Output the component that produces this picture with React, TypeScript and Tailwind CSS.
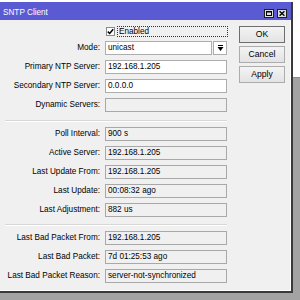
import React from "react";

type Row = { label: string; value: string; kind: "select" | "edit" | "ro" };

const group1: Row[] = [
  { label: "Mode:", value: "unicast", kind: "select" },
  { label: "Primary NTP Server:", value: "192.168.1.205", kind: "edit" },
  { label: "Secondary NTP Server:", value: "0.0.0.0", kind: "edit" },
  { label: "Dynamic Servers:", value: "", kind: "ro" },
];

const group2: Row[] = [
  { label: "Poll Interval:", value: "900 s", kind: "ro" },
  { label: "Active Server:", value: "192.168.1.205", kind: "ro" },
  { label: "Last Update From:", value: "192.168.1.205", kind: "ro" },
  { label: "Last Update:", value: "00:08:32 ago", kind: "ro" },
  { label: "Last Adjustment:", value: "882 us", kind: "ro" },
];

const group3: Row[] = [
  { label: "Last Bad Packet From:", value: "192.168.1.205", kind: "ro" },
  { label: "Last Bad Packet:", value: "7d 01:25:53 ago", kind: "ro" },
  { label: "Last Bad Packet Reason:", value: "server-not-synchronized", kind: "ro" },
];

function Field({ row }: { row: Row }) {
  if (row.kind === "select") {
    return (
      <div className="ml-[5px] flex h-[14px] w-[122px] gap-[1px]">
        <div className="flex h-full w-[107px] items-center border border-[#adadad] bg-white pl-[2px] leading-none">
          {row.value}
        </div>
        <div className="flex h-full w-[14px] items-center justify-center border border-[#adadad] bg-white">
          <svg width="7" height="7" viewBox="0 0 7 7">
            <rect x="1" y="0" width="5" height="1" fill="#000" />
            <polygon points="0.5,2 6.5,2 3.5,6" fill="#000" />
          </svg>
        </div>
      </div>
    );
  }
  return (
    <div
      className={
        row.kind === "edit"
          ? "ml-[5px] flex h-[14px] w-[122px] items-center border border-[#adadad] bg-white pl-[2px] leading-none"
          : "ml-[5px] flex h-[14px] w-[122px] items-center border border-[#a8a8a8] bg-[#f0f0f0] pl-[2px] leading-none"
      }
    >
      {row.value}
    </div>
  );
}

function Rows({ rows }: { rows: Row[] }) {
  return (
    <div className="flex flex-col gap-[5px]">
      {rows.map((r) => (
        <div key={r.label} className="flex h-[14px] items-center">
          <div className="w-[100px] text-right leading-none">{r.label}</div>
          <Field row={r} />
        </div>
      ))}
    </div>
  );
}

function Separator({ top }: { top: string }) {
  return (
    <div className={top + " ml-[5px] w-[222px] border-t border-b border-t-[#d7d7d7] border-b-white"} />
  );
}

export default function App() {
  return (
    <div className="relative h-[300px] w-[300px] overflow-hidden bg-[#a3a3a3] font-['Liberation_Sans',Arial,sans-serif] text-[8.2px] text-black">
      <div className="absolute left-0 top-0 h-[78px] w-full border-b border-[#8c8c8c] bg-white" />
      <div className="absolute left-0 top-[2px] flex h-[291px] w-[293px] flex-col border-b-2 border-r-2 border-[#3a3a3a]">
        <div className="flex h-[18px] items-center bg-[#5a5ad2] pl-[3px] pr-[4px] pt-[4px] text-white">
          <span className="text-[8.2px] leading-none">SNTP Client</span>
          <div className="ml-auto flex gap-[3px]">
            <div className="flex h-[9px] w-[10px] items-center justify-center border border-[#1e1e1e] bg-[#dedede]">
              <svg width="6" height="5" viewBox="0 0 6 5">
                <rect x="0.5" y="0.5" width="5" height="4" fill="none" stroke="#000" strokeWidth="1" />
                <rect x="0" y="0" width="6" height="1.5" fill="#000" />
              </svg>
            </div>
            <div className="flex h-[9px] w-[10px] items-center justify-center border border-[#1e1e1e] bg-[#dedede]">
              <svg width="6" height="5" viewBox="0 0 6 5">
                <path d="M0.6 0.3 L5.4 4.7 M5.4 0.3 L0.6 4.7" stroke="#000" strokeWidth="1.4" />
              </svg>
            </div>
          </div>
        </div>
        <div className="flex flex-1 border-b border-r border-white bg-[#f0f0f0] pt-[5px]">
          <div className="flex w-[228px] flex-col">
            <div className="flex h-[12px] items-center pl-[106px]">
              <div className="flex h-[9px] w-[9px] items-center justify-center border border-[#8a8a8a] bg-white">
                <svg width="7" height="7" viewBox="0 0 7 7">
                  <path d="M0.8 3.6 L2.7 5.5 L6.2 1.2" fill="none" stroke="#000" strokeWidth="1.5" />
                </svg>
              </div>
              <div className="ml-[2px] flex h-[11px] w-[111px] items-center border border-dotted border-[#333] pl-[1px] leading-[9px]">
                <span className="leading-[9px]">Enabled</span>
              </div>
            </div>
            <div className="mt-[4px]">
              <Rows rows={group1} />
            </div>
            <Separator top="mt-[8px]" />
            <div className="mt-[5px]">
              <Rows rows={group2} />
            </div>
            <Separator top="mt-[7px]" />
            <div className="mt-[5px]">
              <Rows rows={group3} />
            </div>
          </div>
          <div className="ml-[11px] mt-[1px] flex flex-col gap-[3px]">
            <div className="flex h-[17px] w-[46px] items-center justify-center border border-[#6e6e6e] bg-gradient-to-b from-[#f4f4f4] to-[#e3e3e3] text-[8.6px] leading-none">
              OK
            </div>
            <div className="flex h-[17px] w-[46px] items-center justify-center border border-[#acacac] bg-gradient-to-b from-[#f4f4f4] to-[#e3e3e3] text-[8.6px] leading-none">
              Cancel
            </div>
            <div className="flex h-[17px] w-[46px] items-center justify-center border border-[#acacac] bg-gradient-to-b from-[#f4f4f4] to-[#e3e3e3] text-[8.6px] leading-none">
              Apply
            </div>
          </div>
        </div>
      </div>
    </div>
  );
}
